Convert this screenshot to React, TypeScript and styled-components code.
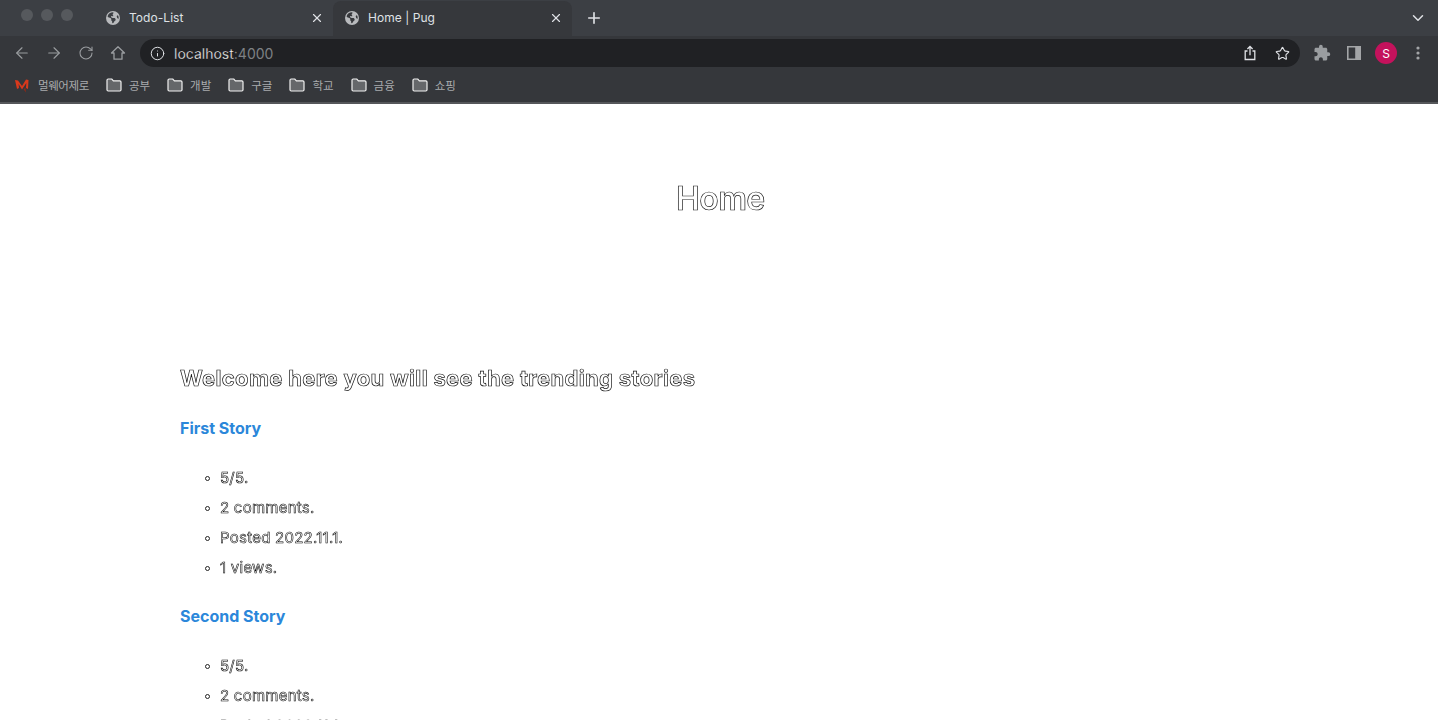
import { createGlobalStyle } from 'styled-components';
import styled from 'styled-components';
import { ArrowLeft, ArrowRight, ChevronDown, Info, Plus, RotateCw, Star, X } from 'lucide-react';
import { FaEarthAmericas } from 'react-icons/fa6';
import { MdExtension } from 'react-icons/md';

const GlobalStyle = createGlobalStyle`
  html, body {
    margin: 0;
    height: 100%;
    overflow: hidden;
    background: #fff;
    font-family: Inter, "Liberation Sans", "Noto Sans CJK KR", sans-serif;
  }
`;

const Chrome = styled.header`
  background: #35373b;
  border-bottom: 2px solid #55575a;
`;

const TabStrip = styled.div`
  height: 36px;
  display: flex;
  align-items: flex-end;
  background: #3c3f44;
  color: #dfe1e5;
`;

const Lights = styled.div`
  width: 94px;
  height: 36px;
  flex: none;
  display: flex;
  gap: 8px;
  padding: 9px 0 0 21px;
  box-sizing: border-box;
`;

const Light = styled.span`
  width: 12px;
  height: 12px;
  border-radius: 50%;
  background: #56595d;
`;

const Tab = styled.div<{ $active?: boolean }>`
  width: 239px;
  height: 35px;
  box-sizing: border-box;
  display: flex;
  align-items: center;
  padding: 0 9px 2px 12px;
  font-size: 12px;
  border-radius: 8px 8px 0 0;
  background: ${(props) => (props.$active ? '#36383c' : 'transparent')};
  svg.globe {
    color: #b8babd;
    margin-right: 9px;
    flex: none;
  }
  svg.close {
    margin-left: auto;
  }
`;

const TabTitle = styled.span`
  letter-spacing: 0.05px;
`;

const NewTab = styled.div`
  width: 44px;
  height: 36px;
  display: flex;
  align-items: center;
  justify-content: center;
`;

const Collapse = styled.div`
  margin-left: auto;
  width: 40px;
  height: 36px;
  display: flex;
  align-items: center;
  justify-content: center;
`;

const Toolbar = styled.div`
  height: 34px;
  display: flex;
  align-items: center;
  padding: 0 4px 0 6px;
  color: #9a9da0;
`;

const NavButton = styled.div`
  width: 32px;
  height: 32px;
  flex: none;
  display: flex;
  align-items: center;
  justify-content: center;
`;

const Omnibox = styled.div`
  flex: 1;
  height: 28px;
  margin: 0 6px;
  display: flex;
  align-items: center;
  padding: 0 2px 0 10px;
  border-radius: 14px;
  background: #202124;
  font-size: 14px;
`;

const InfoSlot = styled.span`
  width: 24px;
  display: flex;
  color: #dfe1e5;
`;

const Url = styled.span`
  color: #7e8184;
`;

const UrlHost = styled.span`
  color: #fff;
  -webkit-text-stroke: 0.3px #111;
`;

const OmniActions = styled.div`
  margin-left: auto;
  display: flex;
  color: #dfe1e5;
`;

const Avatar = styled.div`
  width: 22px;
  height: 22px;
  border-radius: 50%;
  background: #c4125c;
  color: #fff;
  font-size: 12px;
  display: flex;
  align-items: center;
  justify-content: center;
`;

const Bookmarks = styled.div`
  height: 32px;
  box-sizing: border-box;
  padding: 0 0 2px 14px;
  display: flex;
  align-items: center;
  gap: 17px;
  color: #a9abad;
  font-size: 11.5px;
`;

const Bookmark = styled.div<{ $logo?: boolean }>`
  display: flex;
  align-items: center;
  gap: ${(props) => (props.$logo ? '8px' : '7px')};
  letter-spacing: ${(props) => (props.$logo ? '-0.4px' : '0')};
`;

const Page = styled.main`
  background: #fff;
  padding: 0 180px;
`;

const PageHeader = styled.div`
  height: 190px;
  display: flex;
  justify-content: center;
  padding: 75px 0 0 2px;
  box-sizing: border-box;
`;

/* outlined text: kept on its own layer so the stroke stays greyscale */
const Title = styled.h1`
  margin: 0;
  font-size: 32px;
  line-height: 39px;
  font-weight: 600;
  letter-spacing: -0.6px;
  color: #fff;
  -webkit-text-stroke: 0.7px #222;
  will-change: transform;
`;

const Intro = styled.h2`
  margin: 69px 0 0;
  font-size: 22px;
  line-height: 30px;
  font-weight: 700;
  letter-spacing: 0.33px;
  color: #fff;
  -webkit-text-stroke: 0.7px #111;
  will-change: transform;
`;

const StoryTitle = styled.h3`
  margin: 25px 0 0;
  font-size: 16px;
  line-height: 20px;
  font-weight: 700;
  color: #2b87da;
`;

const StatList = styled.ul`
  margin: 25px 0 0;
  padding-left: 40px;
  list-style: none;
  will-change: transform;
`;

const Stat = styled.li`
  position: relative;
  height: 30px;
  line-height: 30px;
  font-size: 15px;
  letter-spacing: 0.25px;
  color: #fff;
  -webkit-text-stroke: 0.55px #000;
  &::before {
    content: '';
    position: absolute;
    left: -15px;
    top: 13px;
    width: 3px;
    height: 3px;
    border: 1px solid #222;
    border-radius: 50%;
  }
`;

const Story = styled.section`
  & + & h3 {
    margin-top: 23px;
  }
`;

function Folder() {
  return (
    <svg width="16" height="14" viewBox="0 0 16 14">
      <path
        d="M1 2.2C1 1.5 1.5 1 2.2 1h3.6l1.6 1.8h6.4c.7 0 1.2.5 1.2 1.2v7.8c0 .7-.5 1.2-1.2 1.2H2.2c-.7 0-1.2-.5-1.2-1.2z"
        fill="#65676a"
        stroke="#f1f1f1"
        strokeWidth="1.2"
      />
    </svg>
  );
}

function MailLogo() {
  return (
    <svg width="16" height="16" viewBox="0 0 16 16">
      <path d="M1 3l3 .5 4 5.5 4-6.5 2.5.5-.5 9-2-1 .3-5L8 12.5 4.6 7 5 11l-2 1z" fill="#d9391c" />
      <path d="M9.6 12.5l2.4 3-.6-5z" fill="#8a2a1a" />
    </svg>
  );
}

function HouseIcon() {
  return (
    <svg width="16" height="16" viewBox="0 0 16 16" fill="none" stroke="currentColor" strokeWidth="1.3">
      <path d="M8 1.8L1.5 8H4v6.2h8V8h2.5z" strokeLinejoin="round" />
    </svg>
  );
}

function ShareIcon() {
  return (
    <svg width="16" height="16" viewBox="0 0 16 16" fill="none" stroke="currentColor" strokeWidth="1.3">
      <path d="M5.5 6H3.2v8.5h9.6V6h-2.3" />
      <path d="M8 10.2V1.5M5.4 4L8 1.5 10.6 4" />
    </svg>
  );
}

function SidePanelIcon() {
  return (
    <svg width="16" height="16" viewBox="0 0 16 16">
      <path fillRule="evenodd" d="M1 1h14v14H1zM2.6 2.6v10.8h6.6V2.6z" fill="#a3a5a7" />
    </svg>
  );
}

function Dots() {
  return (
    <svg width="16" height="16" viewBox="0 0 16 16" fill="#a3a5a7">
      <circle cx="8" cy="3" r="1.6" />
      <circle cx="8" cy="8" r="1.6" />
      <circle cx="8" cy="13" r="1.6" />
    </svg>
  );
}

const folders = ['공부', '개발', '구글', '학교', '금융', '쇼핑'];

const stories = [
  { title: 'First Story', stats: ['5/5.', '2 comments.', 'Posted 2022.11.1.', '1 views.'] },
  { title: 'Second Story', stats: ['5/5.', '2 comments.', 'Posted 2022.11.1.', '1 views.'] },
];

function App() {
  return (
    <>
      <GlobalStyle />
      <Chrome>
        <TabStrip>
          <Lights>
            <Light />
            <Light />
            <Light />
          </Lights>
          <Tab>
            <FaEarthAmericas className="globe" size={14} />
            <TabTitle>Todo-List</TabTitle>
            <X className="close" size={14} />
          </Tab>
          <Tab $active>
            <FaEarthAmericas className="globe" size={14} />
            <TabTitle>Home | Pug</TabTitle>
            <X className="close" size={14} />
          </Tab>
          <NewTab>
            <Plus size={18} strokeWidth={2.2} />
          </NewTab>
          <Collapse>
            <ChevronDown size={18} />
          </Collapse>
        </TabStrip>
        <Toolbar>
          <NavButton>
            <ArrowLeft size={18} strokeWidth={1.5} />
          </NavButton>
          <NavButton>
            <ArrowRight size={18} strokeWidth={1.5} />
          </NavButton>
          <NavButton>
            <RotateCw size={16} strokeWidth={1.6} />
          </NavButton>
          <NavButton>
            <HouseIcon />
          </NavButton>
          <Omnibox>
            <InfoSlot>
              <Info size={15} strokeWidth={1.6} />
            </InfoSlot>
            <Url>
              <UrlHost>localhost</UrlHost>:4000
            </Url>
            <OmniActions>
              <NavButton>
                <ShareIcon />
              </NavButton>
              <NavButton>
                <Star size={15} strokeWidth={1.8} />
              </NavButton>
            </OmniActions>
          </Omnibox>
          <NavButton>
            <MdExtension size={18} />
          </NavButton>
          <NavButton>
            <SidePanelIcon />
          </NavButton>
          <NavButton>
            <Avatar>S</Avatar>
          </NavButton>
          <NavButton>
            <Dots />
          </NavButton>
        </Toolbar>
        <Bookmarks>
          <Bookmark $logo>
            <MailLogo />
            멀웨어제로
          </Bookmark>
          {folders.map((name) => (
            <Bookmark key={name}>
              <Folder />
              {name}
            </Bookmark>
          ))}
        </Bookmarks>
      </Chrome>
      <Page>
        <PageHeader>
          <Title>Home</Title>
        </PageHeader>
        <Intro>Welcome here you will see the trending stories</Intro>
        {stories.map((story) => (
          <Story key={story.title}>
            <StoryTitle>{story.title}</StoryTitle>
            <StatList>
              {story.stats.map((stat) => (
                <Stat key={stat}>{stat}</Stat>
              ))}
            </StatList>
          </Story>
        ))}
      </Page>
    </>
  );
}

export default App;
